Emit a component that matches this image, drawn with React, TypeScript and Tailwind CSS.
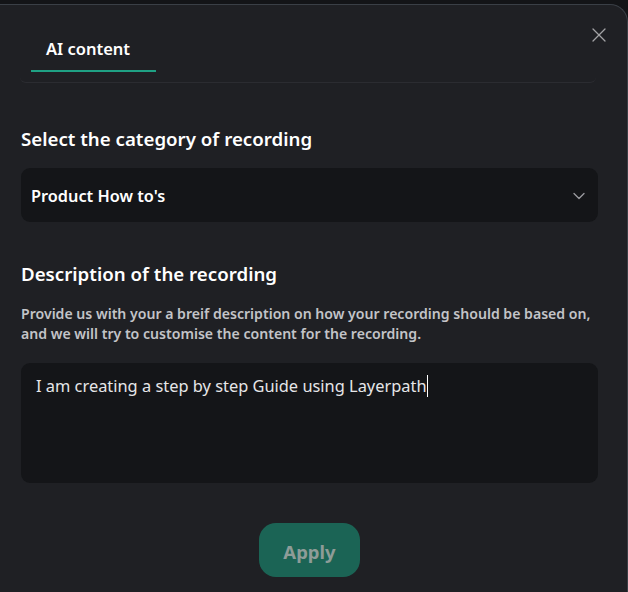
import { ChevronDown, X } from "lucide-react";

export default function App() {
  return (
    <div className="w-[628px] h-[592px] bg-[#131417] pt-[4px] overflow-hidden" style={{ fontFamily: '"Noto Sans", "Open Sans", sans-serif' }}>
      <div className="relative h-[600px] w-[628px] rounded-tr-[18px] border-t border-r border-[#3a3f46] bg-[#1f2024] pl-[21px] pr-[29px]">
        <button type="button" className="absolute right-[16px] top-[18px] text-[#a3a3a6]">
          <X className="h-[24px] w-[24px]" strokeWidth={1.3} />
        </button>

        <div className="pt-[24px] -ml-[1px] mr-[2px]">
          <div className="flex pb-[10px] border-b border-[#2b2c31] rounded-b-md">
            <div className="ml-[11px] w-[125px] h-[43px] pl-[15px] pt-[8px] border-b-[2.5px] border-[#1fa184] text-[16.5px] font-semibold text-white">
              AI content
            </div>
          </div>
        </div>

        <h2 className="mt-[43px] text-[18.7px] font-semibold text-white leading-[26px]">
          Select the category of recording
        </h2>
        <div className="mt-[16px] h-[54px] rounded-[9px] bg-[#141518] flex items-center justify-between pl-[10px] pr-[9px]">
          <span className="text-[16.3px] font-semibold text-white mt-[2px]">Product How to's</span>
          <ChevronDown className="h-[20px] w-[20px] text-[#9a9a9e] mt-[2px]" strokeWidth={1.6} />
        </div>

        <h2 className="mt-[39px] text-[18.7px] font-semibold text-white leading-[26px]">
          Description of the recording
        </h2>
        <p className="mt-[17px] text-[14.1px] font-semibold text-[#c3c4c8] leading-[20px]">
          Provide us with your a breif description on how your recording should be based on, and we will try to customise the content for the recording.
        </p>
        <div className="mt-[19px] h-[120px] rounded-[9px] bg-[#141518] px-[15px] pt-[10px]">
          <span className="text-[16.4px] text-[#e6e6e8] leading-[26px]">I am creating a step by step Guide using Layerpath</span>
          <span className="inline-block w-[1px] h-[22px] bg-white align-middle -mt-[3px]" />
        </div>

        <div className="mt-[40px] flex justify-center">
          <button type="button" className="h-[54px] w-[101px] rounded-[17px] bg-[#1b6455] pt-[3px] text-[18.5px] font-bold text-[#8e9c98]">
            Apply
          </button>
        </div>
      </div>
    </div>
  );
}
